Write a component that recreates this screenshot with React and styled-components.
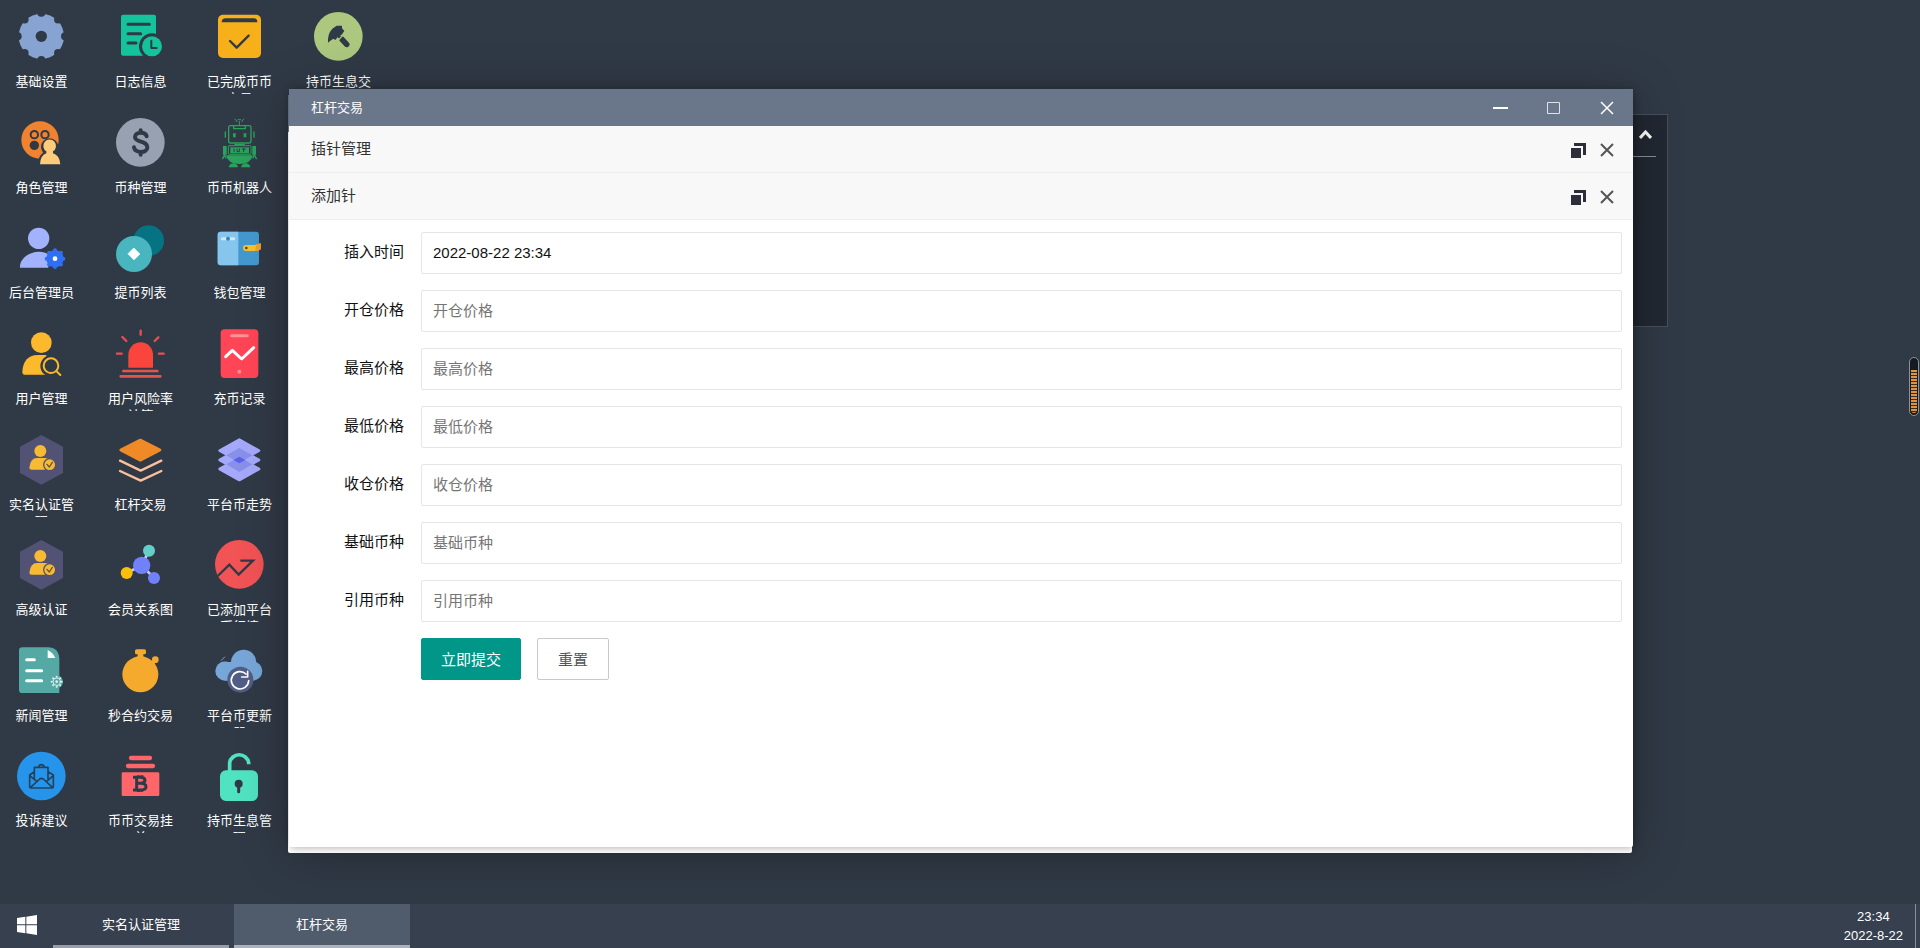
import React from 'react';
import styled, { createGlobalStyle } from 'styled-components';

const DARK = '#303a46';

const GlobalStyle = createGlobalStyle`
  * { box-sizing: border-box; }
  html, body, #root { height: 100%; }
  body {
    margin: 0;
    overflow: hidden;
    background: ${DARK};
    font-family: "Liberation Sans", "Noto Sans CJK SC", sans-serif;
    font-size: 13px;
    color: #fff;
  }
  button, input { font-family: inherit; }
`;

const Desktop = styled.div`
  position: relative;
  height: 100%;
  min-height: 600px;
  display: flex;
  flex-direction: column;
`;

const IconArea = styled.main`
  flex: 1;
  min-height: 0;
  padding: 12px 4px 47px;
`;

const IconGrid = styled.nav`
  height: 100%;
  display: grid;
  grid-auto-flow: column;
  grid-template-rows: repeat(8, 1fr);
  grid-auto-columns: 75px;
  column-gap: 24px;
`;

const Shortcut = styled.a`
  display: flex;
  flex-direction: column;
  align-items: center;
  gap: 12px;
  color: #fff;
  text-decoration: none;
`;

const ShortcutIcon = styled.svg`
  flex: none;
  width: 49px;
  height: 49px;
  overflow: visible;
`;

const ShortcutLabel = styled.span`
  flex: none;
  width: 75px;
  height: 21px;
  overflow: hidden;
  line-height: 17px;
  text-align: center;
  word-break: break-all;
`;

const NotePanel = styled.aside`
  position: absolute;
  top: 114px;
  right: 252px;
  width: 330px;
  height: 213px;
  padding: 0 11px;
  background: #222832;
  border: 1px solid #48505b;
`;

const NoteHead = styled.div`
  display: flex;
  justify-content: flex-end;
  align-items: center;
  height: 42px;
  padding: 0 4px 2px 0;
  border-bottom: 1px solid #8b9098;
`;

const Window = styled.section`
  position: absolute;
  width: 70%;
  height: 80%;
  top: ${(p) => (p.$back ? '10%' : '89px')};
  left: ${(p) => (p.$back ? '15%' : 'calc(15% + 1px)')};
  display: flex;
  flex-direction: column;
  background: #fff;
  border-radius: 2px;
  box-shadow: 1px 1px ${(p) => (p.$back ? '50px' : '8px')} rgba(0, 0, 0, 0.3);
`;

const TitleBar = styled.header`
  flex: none;
  display: flex;
  justify-content: space-between;
  align-items: center;
  height: 37px;
  padding-left: 22px;
  background: #6a768a;
  color: #fff;
`;

const Title = styled.h1`
  margin: 0;
  padding-bottom: 2px;
  font-size: 13px;
  font-weight: 400;
`;

const Controls = styled.div`
  display: flex;
`;

const IconButton = styled.button`
  display: flex;
  justify-content: center;
  align-items: center;
  width: ${(p) => p.$w || 53}px;
  height: 36px;
  padding: 0;
  border: 0;
  background: none;
  color: inherit;
`;

const SubBar = styled.header`
  flex: none;
  display: flex;
  justify-content: space-between;
  align-items: center;
  height: 47px;
  padding: 0 12px 0 22px;
  background: #f8f8f8;
  border-bottom: 1px solid #eee;
  color: #333;
`;

const SubTitle = styled.h2`
  margin: 0;
  padding-bottom: 3px;
  font-size: 15px;
  font-weight: 400;
`;

const SubControls = styled(Controls)`
  padding-top: 2px;
`;

const Form = styled.form`
  display: flex;
  flex-direction: column;
  gap: 16px;
  padding: 12px 11px 0 0;
`;

const FormRow = styled.div`
  display: grid;
  grid-template-columns: 132px 1fr;
`;

const Label = styled.label`
  padding-right: 17px;
  line-height: 40px;
  text-align: right;
  font-size: 15px;
  color: #111;
`;

const Input = styled.input`
  width: 100%;
  height: 42px;
  padding: 0 11px 2px;
  border: 1px solid #e6e6e6;
  border-radius: 2px;
  background: #fff;
  color: #111;
  font-size: 15px;
  outline: none;
  &::placeholder { color: #757575; }
`;

const Actions = styled.div`
  display: flex;
  gap: 16px;
  padding-left: 132px;
`;

const Button = styled.button`
  height: 42px;
  padding: 0 ${(p) => (p.$primary ? 19 : 20)}px 2px;
  border: 1px solid ${(p) => (p.$primary ? '#009688' : '#c9c9c9')};
  border-radius: 2px;
  background: ${(p) => (p.$primary ? '#009688' : '#fff')};
  color: ${(p) => (p.$primary ? '#fff' : '#555')};
  font-size: 15px;
`;

const Gauge = styled.div`
  position: absolute;
  top: 357px;
  right: 1px;
  width: 10px;
  height: 59px;
  padding: 12px 1px 2px;
  border: 1px solid #8d939b;
  border-radius: 5px;
  background: #151a20;
`;

const GaugeFill = styled.div`
  height: 100%;
  border-radius: 0 0 3px 3px;
  background: repeating-linear-gradient(#e09440 0 2px, #3a2a1c 2px 3px);
`;

const TaskBar = styled.footer`
  position: relative;
  flex: none;
  display: flex;
  height: 44px;
  background: #37404f;
`;

const StartButton = styled(IconButton)`
  height: 42px;
`;

const Tasks = styled.div`
  flex: 1;
  display: flex;
  gap: 5px;
`;

const Task = styled.button`
  width: 176px;
  height: 44px;
  padding: 0 0 2px;
  border: 0;
  border-bottom: 3px solid ${(p) => (p.$active ? '#abb2bf' : '#989daa')};
  background: ${(p) => (p.$active ? '#505c6c' : 'transparent')};
  color: #fff;
  font-size: 13px;
`;

const Clock = styled.time`
  padding: 3px 12px;
  line-height: 19px;
  text-align: center;
`;

const ShowDesktop = styled.button`
  width: 5px;
  padding: 0;
  border: 0;
  border-left: 1px solid #8a909b;
  background: none;
`;

const line = (color, width) => ({
  fill: 'none',
  stroke: color,
  strokeWidth: width,
  strokeLinecap: 'round',
  strokeLinejoin: 'round',
});

const ring = (n, radius, cx, cy) =>
  Array.from({ length: n }, (_, i) => {
    const a = (i * 2 * Math.PI) / n;
    return [cx + radius * Math.sin(a), cy - radius * Math.cos(a)];
  });

const verified = (
  <>
    <path d="M73 0 138 35V114L73 149 9 114V35Z" fill="#525274" />
    <circle cx="70" cy="48" r="18" fill="#f6bb32" />
    <path d="M44 104Q37 104 37 98Q40 69 60 69H84Q92 69 98 76V104Z" fill="#f6bb32" />
    <circle cx="98" cy="89" r="20" fill="#525274" />
    <circle cx="98" cy="89" r="16" fill="#f6bb32" />
    <path d="M90 88 97 96 106 82" {...line('#6b5040', 4)} />
  </>
);

const art = {
  settings: (
    <>
      <circle cx="73" cy="73" r="68" fill="#86a3d2" />
      {ring(8, 71, 73, 73).map(([x, y]) => <circle key={x + '-' + y} cx={x} cy={y} r="12" fill={DARK} />)}
      <circle cx="73" cy="73" r="17" fill={DARK} />
    </>
  ),
  log: (
    <>
      <rect x="15" y="8" width="105" height="123" rx="6" fill="#14c39c" />
      <path d="M36 37H100M36 65H74M36 93H60" {...line(DARK, 9)} />
      <circle cx="108" cy="103" r="39" fill={DARK} />
      <circle cx="108" cy="103" r="30" fill="#14c39c" />
      <path d="M106 86V108H122" {...line(DARK, 6)} />
    </>
  ),
  done: (
    <>
      <rect x="9" y="8" width="129" height="130" rx="15" fill="#f7b01a" />
      <path d="M20 31Q20 19 32 19H116Q127 19 127 31Z" fill={DARK} />
      <path d="M45 87 65 107 101 71" {...line(DARK, 7)} />
    </>
  ),
  hammer: (
    <>
      <circle cx="73" cy="73" r="73" fill="#acc87f" />
      <path d="M42 92Q40 66 55 50L68 41 84 41 84 49 91 57 83 68 74 72 64 84 58 80Q50 84 42 92Z" fill={DARK} />
      <path d="M84 82 98 97" {...line(DARK, 17)} />
      <path d="M76 74 88 86" {...line(DARK, 9)} />
      <path d="M86 70 70 88" {...line('#acc87f', 4)} />
    </>
  ),
  role: (
    <>
      <circle cx="69" cy="66" r="56" fill="#f08230" />
      <circle cx="52" cy="50" r="11" {...line(DARK, 6)} />
      <circle cx="84" cy="50" r="11" {...line(DARK, 6)} />
      <circle cx="52" cy="82" r="14" fill={DARK} />
      <circle cx="98" cy="87" r="26" fill={DARK} />
      <path d="M63 139Q63 108 88 100H108Q134 108 134 139Z" fill={DARK} />
      <path d="M69 139Q70 112 88 106V100A19 19 0 1 1 108 100V106Q128 112 130 139Z" fill="#fdcb7a" />
    </>
  ),
  coin: (
    <>
      <circle cx="73" cy="73" r="73" fill="#98a1b2" />
      <path d="M92 55C88 40 57 41 57 57C57 75 94 67 94 88C94 107 57 107 54 88M74 37V44M74 103V110" {...line(DARK, 12)} />
    </>
  ),
  robot: (
    <>
      <path d="M73 22V10M66 11 60 3M80 11 86 3M69 5H77" {...line('#2aa35c', 3)} />
      <rect x="41" y="23" width="67" height="52" rx="6" {...line('#2aa35c', 4)} />
      <path d="M56 25V32H91V25M31 42V58M117 42V58M60 80H88" {...line('#2aa35c', 4)} />
      <path d="M54 46H62V58H54ZM86 46H94V58H86Z" fill="#2aa35c" />
      <rect x="40" y="83" width="68" height="26" rx="3" {...line('#2aa35c', 3)} />
      <rect x="46" y="88" width="56" height="18" fill="#2aa35c" />
      <path d="M57 93V101M66 93V101H73V93M82 93H91M86 93V101" {...line(DARK, 3)} />
      <path d="M33 112H114Q107 138 73 138T33 112Z" fill="#2aa35c" />
      <path d="M28 110V112L23 122M28 110 33 120M118 110 114 120M118 110 124 122" {...line('#2aa35c', 4)} />
      <path d="M24 84H35V110H24ZM112 84H123V110H112ZM41 148Q44 136 56 136Q68 138 69 148ZM78 148Q80 138 92 136Q104 137 106 148Z" fill="#2aa35c" />
    </>
  ),
  admin: (
    <>
      <circle cx="65" cy="46" r="32" fill="#a3b2fd" />
      <path d="M9 134V128C12 104 38 86 66 86Q88 87 94 95V134Z" fill="#a3b2fd" />
      <circle cx="114" cy="107" r="26" fill="#2f6ff5" />
      {ring(8, 25, 114, 107).map(([x, y]) => <circle key={x + '-' + y} cx={x} cy={y} r="6" fill="#2f6ff5" />)}
      <circle cx="114" cy="107" r="7" fill="#fff" />
    </>
  ),
  withdraw: (
    <>
      <circle cx="98" cy="53" r="46" fill="#067383" />
      <circle cx="54" cy="93" r="54" fill="#48b5bf" />
      <path d="M54 76 71 93 54 110 37 93Z" {...line('#fff', 3)} style={{ fill: '#fff' }} />
    </>
  ),
  wallet: (
    <>
      <rect x="8" y="26" width="124" height="101" rx="9" fill="#4399cf" />
      <path d="M70 26H17Q8 26 8 35V118Q8 127 17 127H70Z" fill="#86c6ee" />
      <path d="M22 47H56" {...line('#cfe9fa', 9)} />
      <circle cx="39" cy="47" r="6" fill="#3d80b5" />
      <path d="M93 66H120L137 61V79L128 84H93A9 9 0 0 1 93 66Z" fill="#f9c22e" />
      <path d="M124 65 137 61V79L128 84H120Z" fill="#f6a32b" />
      <circle cx="94" cy="75" r="4" fill="#5a4520" />
    </>
  ),
  users: (
    <>
      <circle cx="73" cy="41" r="31" fill="#fcb92c" />
      <path d="M23 137Q16 137 16 128C18 98 32 78 62 78H88V137Z" fill="#fcb92c" />
      <circle cx="102" cy="111" r="32" fill={DARK} />
      <circle cx="102" cy="110" r="22" {...line('#fcb92c', 6)} />
      <path d="M119 127 130 138" {...line('#fcb92c', 6)} />
    </>
  ),
  alarm: (
    <>
      <path d="M37 116V77A37 37 0 0 1 111 77V116Z" fill="#fa453d" />
      <path d="M22 126H124M14 142H133" {...line('#e5544a', 8)} />
      <path d="M74 5V17M19 24 31 36M127 25 116 36M3 74H17M129 74H143" {...line('#e8504f', 7)} />
    </>
  ),
  phone: (
    <>
      <rect x="17" y="1" width="113" height="146" rx="12" fill="#ff4556" />
      <path d="M50 20H97" {...line('#ff929c', 9)} />
      <path d="M32 83 52 64 80 90 116 56" {...line('#fff', 9)} />
      <circle cx="73" cy="128" r="6" fill="#ff929c" />
    </>
  ),
  verified,
  lever: (
    <>
      <path d="M73 15 132 45 73 76 14 45Z" {...line('#ef8a27', 8)} style={{ fill: '#ef8a27' }} />
      <path d="M12 77 74 107 136 77M12 108 74 137 136 108" {...line('#f9c09a', 7)} />
    </>
  ),
  layers: (
    <>
      {[47, 75, 102].map((y) => (
        <path key={y} d={`M73 ${y - 33} 132 ${y} 73 ${y + 33} 14 ${y}Z`} {...line('#a6a9fb', 8)} style={{ fill: '#a6a9fb' }} />
      ))}
      <path d="M73 39 112 61 73 84 34 61ZM73 66 112 88 73 111 34 88Z" fill="#8791e8" />
      <path d="M73 65 91 75 73 85 55 75Z" fill="#5c60ee" />
    </>
  ),
  nodes: (
    <>
      <path d="M77 76 99 32M77 76 32 99M77 76 114 114" {...line('#c5cefb', 8)} />
      <circle cx="77" cy="76" r="26" fill="#7081fb" />
      <circle cx="99" cy="32" r="18" fill="#64cfc8" />
      <circle cx="32" cy="99" r="18" fill="#fbbe0c" />
      <circle cx="114" cy="114" r="18" fill="#7081fb" />
    </>
  ),
  trend: (
    <>
      <circle cx="73" cy="73" r="73" fill="#f25355" />
      <path d="M8 108 43 74 71 104 114 62H76" fill="none" stroke={DARK} strokeWidth="7" />
    </>
  ),
  news: (
    <>
      <path d="M16 4H92Q126 4 127 40V141H16Q6 141 6 131V14Q6 4 16 4Z" fill="#54a9a4" />
      <path d="M29 41H52M29 74H74M29 104H74" {...line('#fff', 9)} />
      <path d="M92 12 Q108 20 115 36H92Z" fill="#fff" />
      <circle cx="119" cy="107" r="19" fill="#54a9a4" />
      <circle cx="119" cy="107" r="11" {...line('#dff2f0', 3)} />
      {ring(8, 15, 119, 107).map(([x, y]) => <circle key={x + '-' + y} cx={x} cy={y} r="3" fill="#dff2f0" />)}
      <circle cx="119" cy="107" r="4" fill="#dff2f0" />
    </>
  ),
  stopwatch: (
    <>
      <circle cx="73" cy="85" r="54" fill="#f5aa2d" />
      <rect x="57" y="10" width="33" height="15" rx="5" fill="#f5aa2d" />
      <path d="M65 20H82V36H65ZM104 48 114 38 122 46 112 56Z" fill="#f5aa2d" />
      <circle cx="118" cy="41" r="10" fill="#f5aa2d" />
    </>
  ),
  cloud: (
    <>
      <circle cx="30" cy="75" r="29" fill="#77a6d9" />
      <path d="M22 40 32 30 46 25 58 46H26Z" fill={DARK} />
      <circle cx="86" cy="49" r="38" fill="#77a6d9" />
      <circle cx="113" cy="75" r="29" fill="#77a6d9" />
      <path d="M30 48H114V104H30Z" fill="#77a6d9" />
      <path d="M19 43 29 33" {...line('#77a6d9', 3)} />
      <circle cx="76" cy="101" r="39" fill="#525d86" />
      <path d="M93 84A26 26 0 1 0 101 104M98 76V93H80" {...line('#fff', 5)} />
    </>
  ),
  mail: (
    <>
      <circle cx="73" cy="75" r="73" fill="#2694ea" />
      <path d="M52 84V49H93V84M65 49Q66 41 73 41T82 49M52 62 38 72V106Q38 111 43 111H104Q109 111 109 106V72L93 62M38 74 60 92M109 74 88 92M40 110 68 84Q73 80 79 84L107 110" {...line('#20435f', 5)} />
    </>
  ),
  bitcoin: (
    <>
      <path d="M45 21H102M36 45H111" {...line('#ff6569', 13)} />
      <rect x="17" y="64" width="113" height="71" rx="4" fill="#ff6569" />
      <path d="M62 79V117M51 79H74Q87 80 87 88T74 97H62M74 97Q90 98 90 107T74 117H51M67 73V79M78 73V79M67 117V123M78 117V123" fill="none" stroke={DARK} strokeWidth="9" />
    </>
  ),
  lock: (
    <>
      <path d="M44 64V35A29 29 0 0 1 101 35V40" {...line('#50e3c2', 11)} style={{ strokeLinecap: 'butt' }} />
      <rect x="15" y="58" width="114" height="92" rx="18" fill="#50e3c2" />
      <circle cx="71" cy="98" r="12" fill={DARK} />
      <path d="M71 100V122" {...line(DARK, 9)} />
    </>
  ),
};

const shortcuts = [
  ['基础设置', 'settings'], ['角色管理', 'role'], ['后台管理员', 'admin'], ['用户管理', 'users'],
  ['实名认证管理', 'verified'], ['高级认证', 'verified'], ['新闻管理', 'news'], ['投诉建议', 'mail'],
  ['日志信息', 'log'], ['币种管理', 'coin'], ['提币列表', 'withdraw'], ['用户风险率计算', 'alarm'],
  ['杠杆交易', 'lever'], ['会员关系图', 'nodes'], ['秒合约交易', 'stopwatch'], ['币币交易挂单', 'bitcoin'],
  ['已完成币币交易', 'done'], ['币币机器人', 'robot'], ['钱包管理', 'wallet'], ['充币记录', 'phone'],
  ['平台币走势', 'layers'], ['已添加平台币行情', 'trend'], ['平台币更新器', 'cloud'], ['持币生息管理', 'lock'],
  ['持币生息交易', 'hammer'],
];

const fields = [
  ['time', '插入时间', '2022-08-22 23:34'],
  ['open', '开仓价格'],
  ['high', '最高价格'],
  ['low', '最低价格'],
  ['close', '收仓价格'],
  ['base', '基础币种'],
  ['quote', '引用币种'],
];

const Cross = ({ color, width }) => (
  <svg width="14" height="14" viewBox="0 0 14 14">
    <path d="M1 1 13 13M13 1 1 13" fill="none" stroke={color} strokeWidth={width} />
  </svg>
);

function SubHeader({ title }) {
  return (
    <SubBar>
      <SubTitle>{title}</SubTitle>
      <SubControls>
        <IconButton type="button" $w={28} aria-label="还原">
          <svg width="15" height="15" viewBox="0 0 15 15" fill="#2e2d3c">
            <path d="M0 5H10V15H0ZM3 0H15V12H12V3H3Z" />
          </svg>
        </IconButton>
        <IconButton type="button" $w={29} aria-label="关闭">
          <Cross color="#555" width="2" />
        </IconButton>
      </SubControls>
    </SubBar>
  );
}

export default function App() {
  return (
    <>
      <GlobalStyle />
      <Desktop>
        <IconArea>
          <IconGrid>
            {shortcuts.map(([name, icon]) => (
              <Shortcut key={name} href="#">
                <ShortcutIcon viewBox="0 0 147 147">{art[icon]}</ShortcutIcon>
                <ShortcutLabel>{name}</ShortcutLabel>
              </Shortcut>
            ))}
          </IconGrid>
        </IconArea>

        <NotePanel>
          <NoteHead>
            <svg width="13" height="9" viewBox="0 0 13 9">
              <path d="M1 8 6.500 2 12 8" fill="none" stroke="#fff" strokeWidth="3" />
            </svg>
          </NoteHead>
        </NotePanel>

        <Window $back>
          <TitleBar />
        </Window>
        <Window>
          <TitleBar>
            <Title>杠杆交易</Title>
            <Controls>
              <IconButton type="button" aria-label="最小化">
                <svg width="15" height="14" viewBox="0 0 15 14">
                  <path d="M0 7H15" stroke="#fff" strokeWidth="2" />
                </svg>
              </IconButton>
              <IconButton type="button" aria-label="最大化">
                <svg width="13" height="12" viewBox="0 0 13 12">
                  <path d="M.5 .5H12.500V11.500H.5Z" fill="none" stroke="#dfe3ea" />
                </svg>
              </IconButton>
              <IconButton type="button" aria-label="关闭">
                <Cross color="#fff" width="1.500" />
              </IconButton>
            </Controls>
          </TitleBar>
          <SubHeader title="插针管理" />
          <SubHeader title="添加针" />
          <Form onSubmit={(e) => e.preventDefault()}>
            {fields.map(([id, label, value]) => (
              <FormRow key={id}>
                <Label htmlFor={id}>{label}</Label>
                <Input id={id} type="text" defaultValue={value} placeholder={label} />
              </FormRow>
            ))}
            <Actions>
              <Button type="submit" $primary>立即提交</Button>
              <Button type="reset">重置</Button>
            </Actions>
          </Form>
        </Window>

        <Gauge>
          <GaugeFill />
        </Gauge>

        <TaskBar>
          <StartButton type="button" aria-label="开始">
            <svg width="20" height="20" viewBox="0 0 60 60" fill="#fff">
              <path d="M0 9 25 5V28H0ZM28 5 60 0V28H28ZM0 31H25V55L0 51ZM28 31H60V60L28 55Z" />
            </svg>
          </StartButton>
          <Tasks>
            <Task type="button">实名认证管理</Task>
            <Task type="button" $active>杠杆交易</Task>
          </Tasks>
          <Clock dateTime="2022-08-22T23:34">
            23:34
            <br />
            2022-8-22
          </Clock>
          <ShowDesktop type="button" aria-label="显示桌面" />
        </TaskBar>
      </Desktop>
    </>
  );
}
